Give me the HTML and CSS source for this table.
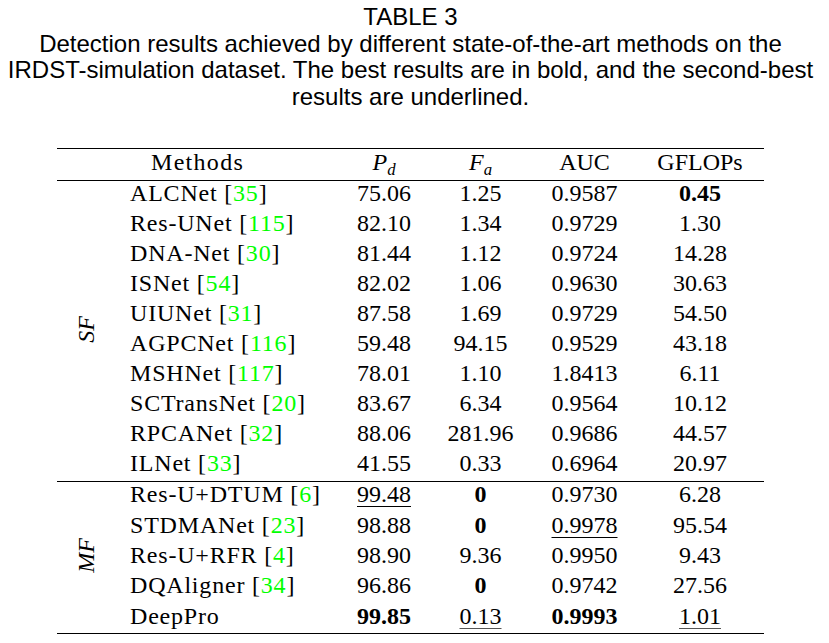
FILE: index.html
```html
<!DOCTYPE html>
<html lang="en">
<head>
<meta charset="utf-8">
<title>Table 3</title>
<link rel="stylesheet" href="styles.css">
</head>
<body>
<div class="caption">
  <div class="caption-title">TABLE 3</div>
  <div class="caption-text">Detection results achieved by different state-of-the-art methods on the<br>IRDST-simulation dataset. The best results are in bold, and the second-best<br>results are underlined.</div>
</div>
<table class="results">
  <colgroup>
    <col class="c-group">
    <col class="c-method">
    <col class="c-pd">
    <col class="c-fa">
    <col class="c-auc">
    <col class="c-gflops">
  </colgroup>
  <thead>
    <tr>
      <th class="grp"></th>
      <th class="method-h">Methods</th>
      <th><i>P</i><sub><i>d</i></sub></th>
      <th><i>F</i><sub><i>a</i></sub></th>
      <th>AUC</th>
      <th>GFLOPs</th>
    </tr>
  </thead>
  <tbody class="sf">
    <tr><td class="grp" rowspan="10"><span class="vlabel">SF</span></td><td class="method">ALCNet [<span class="cite">35</span>]</td><td>75.06</td><td>1.25</td><td>0.9587</td><td><b>0.45</b></td></tr>
    <tr><td class="method">Res-UNet [<span class="cite">115</span>]</td><td>82.10</td><td>1.34</td><td>0.9729</td><td>1.30</td></tr>
    <tr><td class="method">DNA-Net [<span class="cite">30</span>]</td><td>81.44</td><td>1.12</td><td>0.9724</td><td>14.28</td></tr>
    <tr><td class="method">ISNet [<span class="cite">54</span>]</td><td>82.02</td><td>1.06</td><td>0.9630</td><td>30.63</td></tr>
    <tr><td class="method">UIUNet [<span class="cite">31</span>]</td><td>87.58</td><td>1.69</td><td>0.9729</td><td>54.50</td></tr>
    <tr><td class="method">AGPCNet [<span class="cite">116</span>]</td><td>59.48</td><td>94.15</td><td>0.9529</td><td>43.18</td></tr>
    <tr><td class="method">MSHNet [<span class="cite">117</span>]</td><td>78.01</td><td>1.10</td><td>1.8413</td><td>6.11</td></tr>
    <tr><td class="method">SCTransNet [<span class="cite">20</span>]</td><td>83.67</td><td>6.34</td><td>0.9564</td><td>10.12</td></tr>
    <tr><td class="method">RPCANet [<span class="cite">32</span>]</td><td>88.06</td><td>281.96</td><td>0.9686</td><td>44.57</td></tr>
    <tr><td class="method">ILNet [<span class="cite">33</span>]</td><td>41.55</td><td>0.33</td><td>0.6964</td><td>20.97</td></tr>
  </tbody>
  <tbody class="mf">
    <tr><td class="grp" rowspan="5"><span class="vlabel">MF</span></td><td class="method">Res-U+DTUM [<span class="cite">6</span>]</td><td><u>99.48</u></td><td><b>0</b></td><td>0.9730</td><td>6.28</td></tr>
    <tr><td class="method">STDMANet [<span class="cite">23</span>]</td><td>98.88</td><td><b>0</b></td><td><u>0.9978</u></td><td>95.54</td></tr>
    <tr><td class="method">Res-U+RFR [<span class="cite">4</span>]</td><td>98.90</td><td>9.36</td><td>0.9950</td><td>9.43</td></tr>
    <tr><td class="method">DQAligner [<span class="cite">34</span>]</td><td>96.86</td><td><b>0</b></td><td>0.9742</td><td>27.56</td></tr>
    <tr class="last"><td class="method">DeepPro</td><td><b>99.85</b></td><td><u class="light">0.13</u></td><td><b>0.9993</b></td><td><u class="light">1.01</u></td></tr>
  </tbody>
</table>
</body>
</html>
```

FILE: styles.css
```css
html, body {
  margin: 0;
  padding: 0;
  background: #ffffff;
  color: #000000;
}

.caption {
  width: 821px;
  padding-top: 4px;
  font-family: "Liberation Sans", Arial, sans-serif;
  font-size: 24px;
  line-height: 26.7px;
  text-align: center;
  white-space: nowrap;
}

.results {
  margin-top: 37.5px;
  margin-left: 57px;
  width: 707px;
  table-layout: fixed;
  border-collapse: separate;
  border-spacing: 0;
  font-family: "Liberation Serif", "Times New Roman", serif;
  font-size: 24px;
  line-height: 24px;
  color: #000;
}

.c-group { width: 57px; }
.c-method { width: 226px; }
.c-pd { width: 88px; }
.c-fa { width: 105px; }
.c-auc { width: 103px; }
.c-gflops { width: 128px; }

.results th,
.results td {
  padding: 0 0 6px 0;
  text-align: center;
  white-space: nowrap;
  font-weight: normal;
}

.results thead th {
  padding-top: 1px;
  border-top: 1.5px solid #000;
  border-bottom: 1px solid #000;
}

.results th.method-h {
  text-align: left;
  padding-left: 37px;
  letter-spacing: 1.3px;
}

.results td.method {
  text-align: left;
  padding-left: 16px;
  letter-spacing: 0.8px;
}

.results sub {
  font-size: 0.7em;
  vertical-align: -0.28em;
  line-height: 0;
}

.results td.grp {
  vertical-align: middle;
  padding: 0;
}

.vlabel {
  display: inline-block;
  writing-mode: vertical-rl;
  transform: rotate(180deg);
  font-style: italic;
  line-height: 24px;
}

.cite {
  color: #00ff00;
}

.results b {
  font-weight: bold;
}

.results u {
  text-decoration: underline;
  text-decoration-thickness: 1px;
  text-underline-offset: 4px;
}

.results u.light {
  text-decoration-color: #555;
}

.mf td {
  padding-bottom: 6.4px;
}

.mf tr:first-child td {
  border-top: 1px solid #000;
}

.mf tr.last td,
.mf td.grp {
  border-bottom: 1.5px solid #000;
}

.mf tr.last td {
  padding-bottom: 5px;
}
```
